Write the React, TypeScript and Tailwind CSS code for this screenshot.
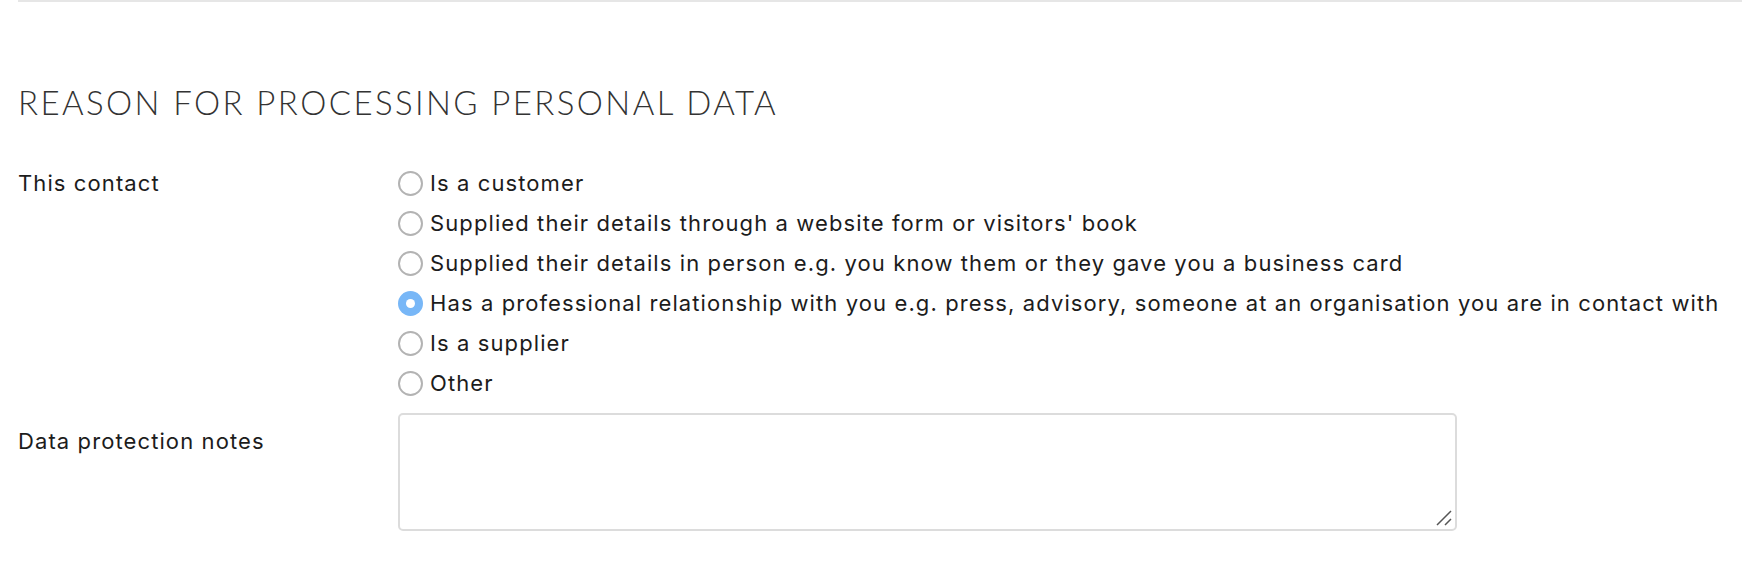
import { useState } from 'react';

const reasons = [
  'Is a customer',
  "Supplied their details through a website form or visitors' book",
  'Supplied their details in person e.g. you know them or they gave you a business card',
  'Has a professional relationship with you e.g. press, advisory, someone at an organisation you are in contact with',
  'Is a supplier',
  'Other',
];

export default function App() {
  const [reason, setReason] = useState(3);
  const [notes, setNotes] = useState('');

  return (
    <div className="min-h-[566px] bg-white pl-[18px] font-['Inter',sans-serif] text-[#1c1c1c]">
      <div className="h-[2px] bg-[#e6e6e6]" />
      <h2 className="mt-[80px] font-['Lato',sans-serif] text-[33px] leading-[40px] font-light tracking-[2.4px] text-[#333]">
        REASON FOR PROCESSING PERSONAL DATA
      </h2>

      <div className="mt-[41px] flex">
        <div className="w-[380px] shrink-0 text-[22px] leading-[40px] tracking-[1.1px]">This contact</div>
        <div className="flex flex-col">
          {reasons.map((r, i) => (
            <label key={r} className="flex h-[40px] cursor-pointer items-center gap-[7px] text-[22px] tracking-[1.1px]">
              <input type="radio" name="reason" checked={reason === i} onChange={() => setReason(i)} className="sr-only" />
              {reason === i ? (
                <span className="flex h-[25px] w-[25px] shrink-0 items-center justify-center rounded-full bg-[#78b7f7]">
                  <span className="h-[9px] w-[9px] rounded-full bg-white" />
                </span>
              ) : (
                <span className="h-[25px] w-[25px] shrink-0 rounded-full border-2 border-[#b3b3b3]" />
              )}
              <span>{r}</span>
            </label>
          ))}
        </div>
      </div>

      <div className="mt-[10px] flex">
        <div className="w-[380px] shrink-0 pt-[16px] text-[22px] leading-[24px] tracking-[1.1px]">Data protection notes</div>
        <div className="relative">
          <textarea
            value={notes}
            onChange={e => setNotes(e.target.value)}
            className="block h-[118px] w-[1059px] resize-none rounded-[5px] border-2 border-[#dcdcdc] px-3 py-2 text-[20px] focus:outline-none"
          />
          <svg className="pointer-events-none absolute bottom-[5px] right-[5px]" width="16" height="16" viewBox="0 0 16 16">
            <path d="M1 15 L15 1 M9 15 L15 9" stroke="#555" strokeWidth="1.5" />
          </svg>
        </div>
      </div>
    </div>
  );
}
